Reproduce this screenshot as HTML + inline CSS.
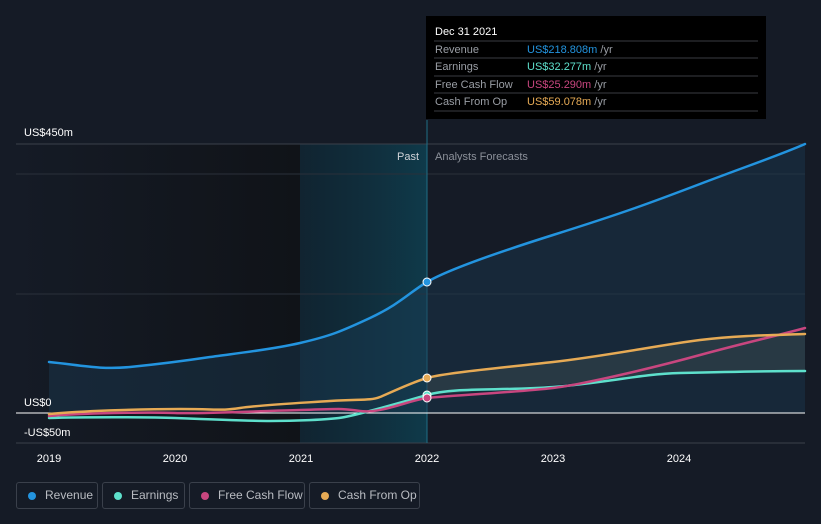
<!DOCTYPE html>
<html><head><meta charset="utf-8"><style>
body{margin:0;background:#151b26;font-family:"Liberation Sans",sans-serif;}
svg{display:block}
.lg{position:absolute;top:482px;height:27px;border:1px solid #3a404b;border-radius:3px;box-sizing:border-box;color:#b9bcc2;font-size:12px;line-height:25px;padding-left:27px;white-space:nowrap}
.lg i{position:absolute;left:11px;top:9px;width:8px;height:8px;border-radius:50%}
</style></head><body>
<div style="position:relative;width:821px;height:524px;overflow:hidden">
<svg width="821" height="524">
<defs>
<linearGradient id="past" x1="0" x2="1"><stop offset="0" stop-color="#0e2a38" stop-opacity="0.6"/><stop offset="1" stop-color="#0f3a4a"/></linearGradient>
<linearGradient id="dark" x1="0" x2="1"><stop offset="0" stop-color="#151b26"/><stop offset="1" stop-color="#101318"/></linearGradient>
</defs>
<rect x="16" y="144" width="284" height="299" fill="url(#dark)"/>
<rect x="300" y="144" width="127" height="299" fill="url(#past)"/>
<line x1="16" y1="144" x2="805" y2="144" stroke="#3a404b"/>
<line x1="16" y1="174" x2="805" y2="174" stroke="#2a303a"/>
<line x1="16" y1="294" x2="805" y2="294" stroke="#2a303a"/>
<line x1="16" y1="443" x2="805" y2="443" stroke="#3a404b"/>
<line x1="427" y1="120" x2="427" y2="443" stroke="#1f6f86"/>
<path d="M49,362 C80,365 100,370 130,367 S190,360 210,357 S270,350 300,343 S340,332 370,318 S410,292 427,282 S480,258 553,235 S650,203 700,184 S780,155 805,144 L805,413 L49,413Z" fill="#1b3a52" opacity="0.45"/>
<path d="M427,378 C470,368 520,366 553,362 S650,346 700,340 S780,335 805,334 L805,371 C700,372 680,373 620,379 S480,391 427,395Z" fill="#3a4a50" opacity="0.5"/>
<line x1="16" y1="413" x2="805" y2="413" stroke="#ffffff"/>
<g fill="none" stroke-width="2.5" stroke-linecap="round">
<path d="M49,418 C80,417 150,417 175,418 S250,421 270,421 S330,420 345,417 S400,403 427,395 S500,391 553,387 S640,374 680,373 S780,371 805,371" stroke="#5ee0cc"/>
<path d="M49,416 C80,413 150,412 175,413 S260,411 300,410 S340,408 360,411 S410,400 427,398 S520,392 553,388 S660,366 700,355 S780,335 805,328" stroke="#c8467f"/>
<path d="M49,414 C80,411 140,409 180,409 S220,411 240,408 S300,403 330,401 S370,401 380,397 S410,383 427,378 S500,368 553,362 S660,345 700,340 S780,335 805,334" stroke="#e6aa55"/>
<path d="M49,362 C80,365 100,370 130,367 S190,360 210,357 S270,350 300,343 S340,332 370,318 S410,292 427,282 S480,258 553,235 S650,203 700,184 S780,155 805,144" stroke="#2394df"/>
</g>
<circle cx="427" cy="282" r="4" fill="#2394df" stroke="#fff" stroke-width="1"/>
<circle cx="427" cy="378" r="4" fill="#e6aa55" stroke="#fff" stroke-width="1"/>
<circle cx="427" cy="395" r="4" fill="#5ee0cc" stroke="#fff" stroke-width="1"/>
<circle cx="427" cy="398" r="4" fill="#c8467f" stroke="#fff" stroke-width="1"/>
<g font-size="11" fill="#ffffff">
<text x="24" y="136">US$450m</text>
<text x="24" y="406">US$0</text>
<text x="24" y="436">-US$50m</text>
<g text-anchor="middle"><text x="49" y="462">2019</text><text x="175" y="462">2020</text><text x="301" y="462">2021</text><text x="427" y="462">2022</text><text x="553" y="462">2023</text><text x="679" y="462">2024</text></g>
<text x="419" y="160" text-anchor="end" fill="#d0d3d8">Past</text>
<text x="435" y="160" fill="#8c919a">Analysts Forecasts</text>
</g>
<rect x="426" y="16" width="340" height="103" fill="#000"/>
<g font-size="11">
<text x="435" y="35" fill="#fff">Dec 31 2021</text>
<g stroke="#3a3d42"><line x1="434" y1="41" x2="758" y2="41"/><line x1="434" y1="58" x2="758" y2="58"/><line x1="434" y1="76" x2="758" y2="76"/><line x1="434" y1="93" x2="758" y2="93"/><line x1="434" y1="111" x2="758" y2="111"/></g>
<text x="435" y="53" fill="#9a9ea5">Revenue</text><text x="527" y="53" fill="#2394df">US$218.808m <tspan fill="#9a9ea5">/yr</tspan></text>
<text x="435" y="70" fill="#9a9ea5">Earnings</text><text x="527" y="70" fill="#5ee0cc">US$32.277m <tspan fill="#9a9ea5">/yr</tspan></text>
<text x="435" y="88" fill="#9a9ea5">Free Cash Flow</text><text x="527" y="88" fill="#c8467f">US$25.290m <tspan fill="#9a9ea5">/yr</tspan></text>
<text x="435" y="105" fill="#9a9ea5">Cash From Op</text><text x="527" y="105" fill="#e6aa55">US$59.078m <tspan fill="#9a9ea5">/yr</tspan></text>
</g>
</svg>
<div class="lg" style="left:16px;width:82px;padding-left:28px"><i style="background:#2394df"></i>Revenue</div>
<div class="lg" style="left:102px;width:83px;padding-left:28px"><i style="background:#5ee0cc"></i>Earnings</div>
<div class="lg" style="left:189px;width:116px;padding-left:28px"><i style="background:#c8467f"></i>Free Cash Flow</div>
<div class="lg" style="left:309px;width:111px;padding-left:28px"><i style="background:#e6aa55"></i>Cash From Op</div>
</div>
</body></html>
